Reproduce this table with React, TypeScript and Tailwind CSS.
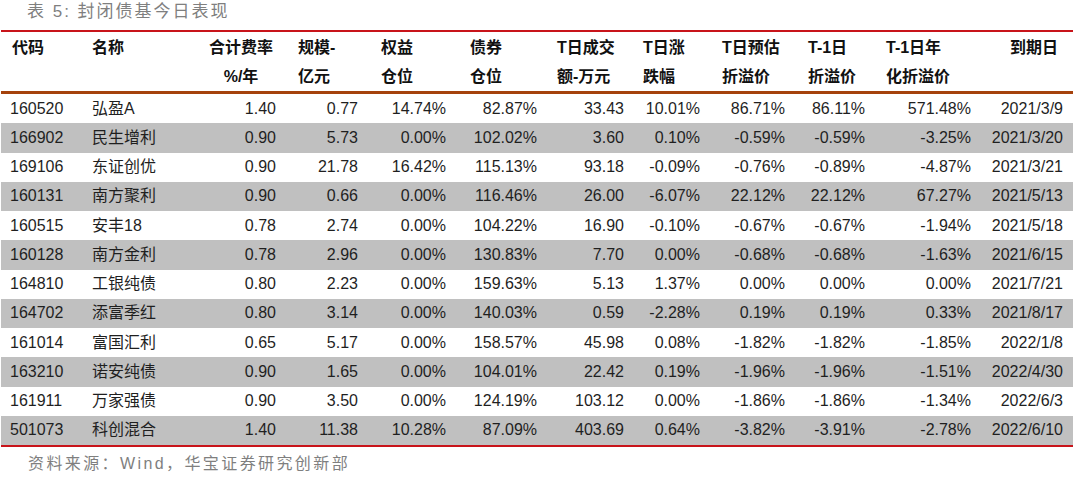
const cols = "grid grid-cols-[84px_110px_88px_82px_88px_91px_87px_76px_85px_80px_106px_94px]";

const headers: { lines: string[]; cls: string }[] = [
  { lines: ["代码", ""], cls: "pl-[10px]" },
  { lines: ["名称", ""], cls: "pl-[6px]" },
  { lines: ["合计费率", "%/年"], cls: "items-center pl-[2px]" },
  { lines: ["规模-", "亿元"], cls: "pl-[14px]" },
  { lines: ["权益", "仓位"], cls: "pl-[15px]" },
  { lines: ["债券", "仓位"], cls: "pl-[16px]" },
  { lines: ["T日成交", "额-万元"], cls: "pl-[12px]" },
  { lines: ["T日涨", "跌幅"], cls: "pl-[11px]" },
  { lines: ["T日预估", "折溢价"], cls: "pl-[14px]" },
  { lines: ["T-1日", "折溢价"], cls: "pl-[15px]" },
  { lines: ["T-1日年", "化折溢价"], cls: "pl-[13px]" },
  { lines: ["到期日", ""], cls: "items-end pr-[15px]" },
];

const rows: string[][] = [
  ["160520", "弘盈A", "1.40", "0.77", "14.74%", "82.87%", "33.43", "10.01%", "86.71%", "86.11%", "571.48%", "2021/3/9"],
  ["166902", "民生增利", "0.90", "5.73", "0.00%", "102.02%", "3.60", "0.10%", "-0.59%", "-0.59%", "-3.25%", "2021/3/20"],
  ["169106", "东证创优", "0.90", "21.78", "16.42%", "115.13%", "93.18", "-0.09%", "-0.76%", "-0.89%", "-4.87%", "2021/3/21"],
  ["160131", "南方聚利", "0.90", "0.66", "0.00%", "116.46%", "26.00", "-6.07%", "22.12%", "22.12%", "67.27%", "2021/5/13"],
  ["160515", "安丰18", "0.78", "2.74", "0.00%", "104.22%", "16.90", "-0.10%", "-0.67%", "-0.67%", "-1.94%", "2021/5/18"],
  ["160128", "南方金利", "0.78", "2.96", "0.00%", "130.83%", "7.70", "0.00%", "-0.68%", "-0.68%", "-1.63%", "2021/6/15"],
  ["164810", "工银纯债", "0.80", "2.23", "0.00%", "159.63%", "5.13", "1.37%", "0.00%", "0.00%", "0.00%", "2021/7/21"],
  ["164702", "添富季红", "0.80", "3.14", "0.00%", "140.03%", "0.59", "-2.28%", "0.19%", "0.19%", "0.33%", "2021/8/17"],
  ["161014", "富国汇利", "0.65", "5.17", "0.00%", "158.57%", "45.98", "0.08%", "-1.82%", "-1.82%", "-1.85%", "2022/1/8"],
  ["163210", "诺安纯债", "0.90", "1.65", "0.00%", "104.01%", "22.42", "0.19%", "-1.96%", "-1.96%", "-1.51%", "2022/4/30"],
  ["161911", "万家强债", "0.90", "3.50", "0.00%", "124.19%", "103.12", "0.00%", "-1.86%", "-1.86%", "-1.34%", "2022/6/3"],
  ["501073", "科创混合", "1.40", "11.38", "10.28%", "87.09%", "403.69", "0.64%", "-3.82%", "-3.91%", "-2.78%", "2022/6/10"],
];

function cellClass(i: number) {
  if (i === 0) return "pl-[8px]";
  if (i === 1) return "pl-[6px]";
  if (i === 11) return "text-right pr-[10px]";
  return "text-right pr-[8px]";
}

export default function App() {
  return (
    <div className="w-[1080px] h-[477px] bg-white font-['Liberation_Sans','Noto_Sans_CJK_SC',sans-serif] text-[#1f1f1f]">
      <div className="h-[30px] pl-[27px] pt-[1px] text-[17px] leading-[22px] tracking-[2px] text-[#7f7f7f]">
        表 5: 封闭债基今日表现
      </div>

      <div className="ml-[1px] w-[1072px]">
        <div className="h-[2px] bg-[#c8141a]" />

        <div className={`${cols} h-[59px] pl-[1px] text-[16px] font-bold text-[#111]`}>
          {headers.map((h, i) => (
            <div key={i} className={`flex flex-col pt-[1px] leading-[29px] ${h.cls}`}>
              <span>{h.lines[0]}</span>
              <span>{h.lines[1] || "\u00a0"}</span>
            </div>
          ))}
        </div>

        <div className="h-[3px] bg-[#a5420c]" />

        {rows.map((r, ri) => (
          <div
            key={r[0]}
            className={`${cols} h-[29.25px] pl-[1px] items-center text-[16px] leading-[20px] ${ri % 2 === 1 ? "bg-[#c0c0c0]" : "bg-white"}`}
          >
            {r.map((v, ci) => (
              <div key={ci} className={cellClass(ci)}>
                {v}
              </div>
            ))}
          </div>
        ))}

        <div className="h-[2px] bg-[#c8141a]" />
      </div>

      <div className="pl-[28px] pt-[6px] text-[16px] leading-[22px] tracking-[2.4px] text-[#7f7f7f]">
        资料来源：Wind，华宝证券研究创新部
      </div>
    </div>
  );
}
